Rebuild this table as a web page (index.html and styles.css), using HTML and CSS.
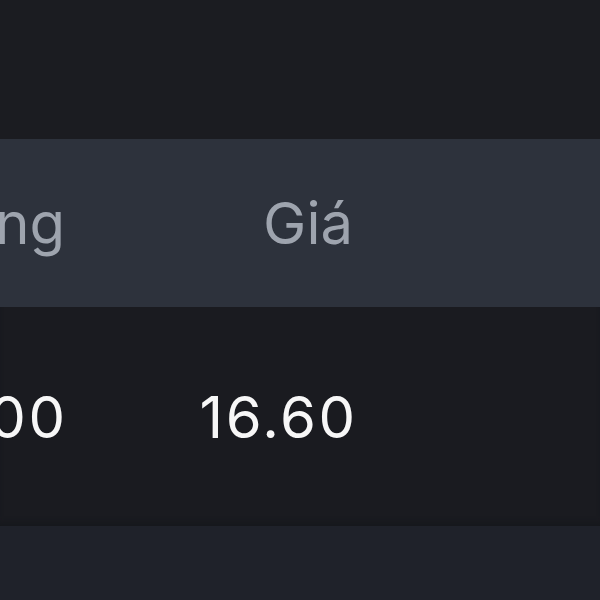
FILE: index.html
```html
<!DOCTYPE html>
<html lang="vi">
<head>
<meta charset="utf-8">
<link rel="stylesheet" href="styles.css">
</head>
<body>
<div class="screen">
  <div class="top"></div>
  <div class="row head">
    <div class="cell c1"><span>Khối lượng</span></div>
    <div class="cell c2"><span>Giá</span></div>
  </div>
  <div class="row body">
    <div class="cell c1"><span class="num">1,000</span></div>
    <div class="cell c2"><span class="num">16.60</span></div>
  </div>
  <div class="bottom"></div>
</div>
</body>
</html>
```
FILE: styles.css
```css
html, body {
  margin: 0;
  padding: 0;
  background: #1a1b20;
}
.screen {
  width: 600px;
  height: 600px;
  overflow: hidden;
  display: flex;
  flex-direction: column;
  font-family: Inter, "Noto Sans", sans-serif;
  font-size: 58px;
}
.top {
  height: 139px;
  background: #1b1c21;
  flex: none;
}
.row {
  display: flex;
  align-items: center;
  flex: none;
}
.head {
  height: 168px;
  background: #2d323c;
  color: #9ea4ae;
}
.head .c2 {
  padding-right: 2px;
}
.body {
  height: 219px;
  background: #1a1b20;
  color: #f7f7f7;
  box-shadow: inset 0 -6px 6px -4px #15181b;
}
.num {
  letter-spacing: 2.5px;
  margin-right: -2.5px;
}
.cell {
  display: flex;
  justify-content: flex-end;
  white-space: nowrap;
  flex: none;
  box-sizing: border-box;
}
.c1 {
  width: 65px;
}
.c2 {
  width: 290px;
}
.bottom {
  flex: 1;
  background: #1f222a;
}
```
